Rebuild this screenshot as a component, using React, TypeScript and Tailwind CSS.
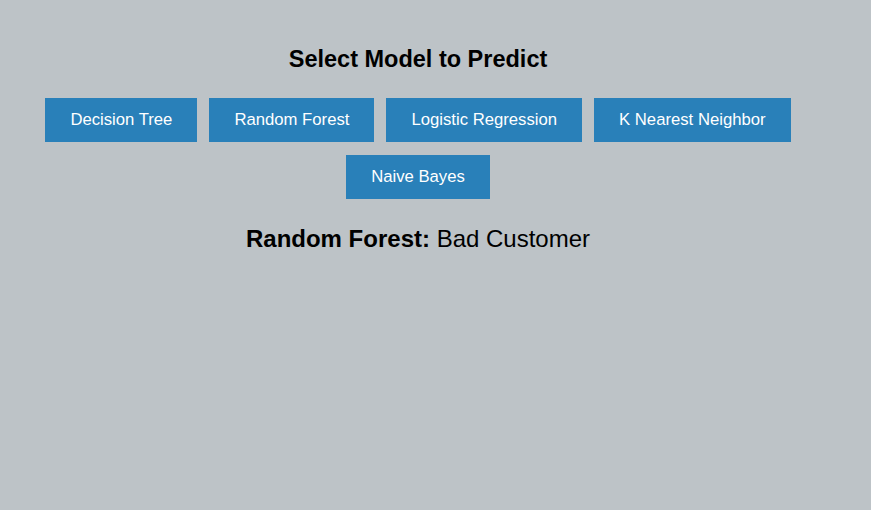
import { useState } from "react";

const models = ["Decision Tree", "Random Forest", "Logistic Regression", "K Nearest Neighbor", "Naive Bayes"];

export default function App() {
  const [selected, setSelected] = useState("Random Forest");

  return (
    <div className="min-h-screen w-full bg-[#bdc3c7] font-['Liberation_Sans',Arial,sans-serif] text-black">
      <div className="w-[836px] pt-[45px] flex flex-col items-center">
        <h2 className="text-[23.5px] font-bold leading-[28px]">Select Model to Predict</h2>
        <div className="mt-[25px] flex flex-wrap justify-center gap-x-[12px] gap-y-[13px] px-[30px]">
          {models.map((m) => (
            <button
              key={m}
              onClick={() => setSelected(m)}
              className="bg-[#2980b9] text-white text-[16.7px] leading-[20px] px-[25px] py-[12px] cursor-pointer"
            >
              {m}
            </button>
          ))}
        </div>
        <p className="mt-[26px] text-[24px] leading-[28px]">
          <span className="font-bold">{selected}:</span> Bad Customer
        </p>
      </div>
    </div>
  );
}
